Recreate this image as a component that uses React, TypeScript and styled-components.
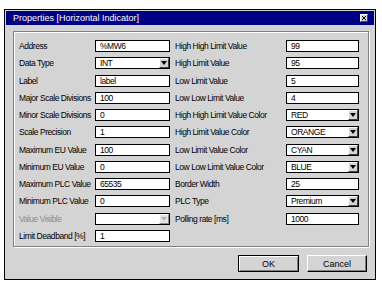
import React from "react"
import styled, {createGlobalStyle} from "styled-components"

const GlobalStyle = createGlobalStyle`
  html, body {
    margin: 0;
    padding: 0;
    background: #ffffff;
  }
  body {
    font-family: "Liberation Sans", Arial, sans-serif;
    font-size: 8.5px;
    letter-spacing: -0.45px;
    color: #000;
  }
`

const Page = styled.div`
  padding: 9px 0 0 4px;
`

const Window = styled.div`
  width: 372px;
  height: 271px;
  box-sizing: border-box;
  background: #d4d4d4;
  border: 1px solid #000;
  display: flex;
  flex-direction: column;
`

const TitleBar = styled.div`
  margin: 1px 1px 0 1px;
  height: 14px;
  background: #000084;
  color: #fff;
  display: flex;
  align-items: center;
  justify-content: space-between;
  padding: 0 6px 0 7px;
  font-size: 9px;
  letter-spacing: 0;
`

const CloseButton = styled.div`
  width: 8px;
  height: 8px;
  box-sizing: border-box;
  background: #d4d4d4;
  border: 1px solid #fff;
  border-right-color: #404040;
  border-bottom-color: #404040;
  display: flex;
  align-items: center;
  justify-content: center;
`

const Body = styled.div`
  padding: 6px 6px 0 8px;
  display: flex;
  flex-direction: column;
`

const Panel = styled.div`
  height: 216px;
  box-sizing: border-box;
  border: 1px solid #808080;
  box-shadow: inset 1px 1px 0 #fff, 1px 1px 0 #fff;
  padding: 8px 0 0 5px;
  display: flex;
`

const Column = styled.div<{labelWidth: number, fieldWidth: number, offset?: number}>`
  display: grid;
  grid-template-columns: ${p => p.labelWidth}px ${p => p.fieldWidth}px;
  grid-auto-rows: 12px;
  row-gap: 5.27px;
  margin-left: ${p => p.offset || 0}px;
  align-content: start;
`

const Label = styled.div<{disabled?: boolean}>`
  display: flex;
  align-items: center;
  white-space: nowrap;
  color: ${p => p.disabled ? "#8c8c8c" : "#000"};
`

const Field = styled.div`
  box-sizing: border-box;
  height: 12px;
  background: #fff;
  border: 1px solid #000;
  display: flex;
  align-items: center;
  padding-left: 4px;
  position: relative;
`

const ArrowBox = styled.div<{disabled?: boolean}>`
  position: absolute;
  right: 0;
  top: 0;
  bottom: 0;
  width: 10px;
  box-sizing: border-box;
  background: #d4d4d4;
  border: 1px solid #fff;
  border-right-color: #404040;
  border-bottom-color: #404040;
  display: flex;
  align-items: center;
  justify-content: center;
  opacity: ${p => p.disabled ? 0.6 : 1};
`

const Triangle = styled.div<{disabled?: boolean}>`
  width: 0;
  height: 0;
  border-left: 3px solid transparent;
  border-right: 3px solid transparent;
  border-top: 4px solid ${p => p.disabled ? "#808080" : "#000"};
`

const ButtonRow = styled.div`
  margin-top: 8px;
  padding-right: 2px;
  display: flex;
  justify-content: flex-end;
  gap: 8px;
`

const Button = styled.div<{width: number, isDefault?: boolean}>`
  width: ${p => p.width}px;
  height: 17px;
  box-sizing: border-box;
  background: #d4d4d4;
  border: 1px solid ${p => p.isDefault ? "#000" : "#fff"};
  border-right-color: #000;
  border-bottom-color: #000;
  box-shadow: ${p => p.isDefault
    ? "inset 1px 1px 0 #fff, inset -1px -1px 0 #808080"
    : "inset -1px -1px 0 #808080"};
  display: flex;
  align-items: center;
  justify-content: center;
  font-size: 9px;
  letter-spacing: 0;
`

type Row = {label: string, value: string, select?: boolean, disabled?: boolean}

const leftRows: Row[] = [
  {label: "Address", value: "%MW6"},
  {label: "Data Type", value: "INT", select: true},
  {label: "Label", value: "label"},
  {label: "Major Scale Divisions", value: "100"},
  {label: "Minor Scale Divisions", value: "0"},
  {label: "Scale Precision", value: "1"},
  {label: "Maximum EU Value", value: "100"},
  {label: "Minimum EU Value", value: "0"},
  {label: "Maximum PLC Value", value: "65535"},
  {label: "Minimum PLC Value", value: "0"},
  {label: "Value Visible", value: "", select: true, disabled: true},
  {label: "Limit Deadband [%]", value: "1"},
]

const rightRows: Row[] = [
  {label: "High High Limit Value", value: "99"},
  {label: "High Limit Value", value: "95"},
  {label: "Low Limit Value", value: "5"},
  {label: "Low Low Limit Value", value: "4"},
  {label: "High High Limit Value Color", value: "RED", select: true},
  {label: "High Limit Value Color", value: "ORANGE", select: true},
  {label: "Low Limit Value Color", value: "CYAN", select: true},
  {label: "Low Low Limit Value Color", value: "BLUE", select: true},
  {label: "Border Width", value: "25"},
  {label: "PLC Type", value: "Premium", select: true},
  {label: "Polling rate [ms]", value: "1000"},
]

const renderRows = (rows: Row[]) => rows.map(row => (
  <React.Fragment key={row.label}>
    <Label disabled={row.disabled}>{row.label}</Label>
    <Field>
      {row.value}
      {row.select && (
        <ArrowBox disabled={row.disabled}>
          <Triangle disabled={row.disabled}/>
        </ArrowBox>
      )}
    </Field>
  </React.Fragment>
))

const App: React.FC = () => {
  return (
    <Page>
      <GlobalStyle/>
      <Window>
        <TitleBar>
          <span>Properties [Horizontal Indicator]</span>
          <CloseButton>
            <svg width="4" height="4" viewBox="0 0 4 4">
              <path d="M0 0L4 4M4 0L0 4" stroke="#000" strokeWidth="1"/>
            </svg>
          </CloseButton>
        </TitleBar>
        <Body>
          <Panel>
            <Column labelWidth={76} fieldWidth={75}>
              {renderRows(leftRows)}
            </Column>
            <Column labelWidth={111} fieldWidth={73} offset={5}>
              {renderRows(rightRows)}
            </Column>
          </Panel>
          <ButtonRow>
            <Button width={61} isDefault>OK</Button>
            <Button width={60}>Cancel</Button>
          </ButtonRow>
        </Body>
      </Window>
    </Page>
  )
}

export default App
